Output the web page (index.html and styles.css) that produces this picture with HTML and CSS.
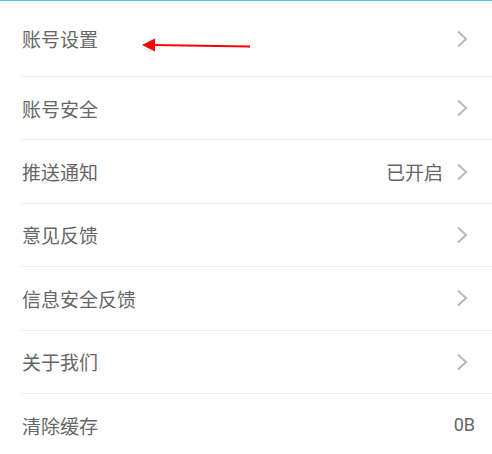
FILE: index.html
```html
<!DOCTYPE html>
<html lang="zh-CN">
<head>
<meta charset="utf-8">
<link rel="stylesheet" href="styles.css">
</head>
<body>
<div class="topline"></div>
<ul class="list">
  <li class="item first">
    <span class="label">账号设置</span>
    <span class="right"><svg class="chev" viewBox="0 0 12 18"><path d="M2 1.5 L10 9 L2 16.5"/></svg></span>
    <svg class="arrow" viewBox="0 0 110 16" width="110" height="16">
      <line x1="10" y1="7" x2="108" y2="8.5" stroke="#f00" stroke-width="2"/>
      <polygon points="0,7 13,0.5 13,13.5" fill="#f00"/>
    </svg>
  </li>
  <li class="item">
    <span class="label">账号安全</span>
    <span class="right"><svg class="chev" viewBox="0 0 12 18"><path d="M2 1.5 L10 9 L2 16.5"/></svg></span>
  </li>
  <li class="item">
    <span class="label">推送通知</span>
    <span class="right"><span class="value">已开启</span><svg class="chev" viewBox="0 0 12 18"><path d="M2 1.5 L10 9 L2 16.5"/></svg></span>
  </li>
  <li class="item">
    <span class="label">意见反馈</span>
    <span class="right"><svg class="chev" viewBox="0 0 12 18"><path d="M2 1.5 L10 9 L2 16.5"/></svg></span>
  </li>
  <li class="item">
    <span class="label">信息安全反馈</span>
    <span class="right"><svg class="chev" viewBox="0 0 12 18"><path d="M2 1.5 L10 9 L2 16.5"/></svg></span>
  </li>
  <li class="item">
    <span class="label">关于我们</span>
    <span class="right"><svg class="chev" viewBox="0 0 12 18"><path d="M2 1.5 L10 9 L2 16.5"/></svg></span>
  </li>
  <li class="item last">
    <span class="label">清除缓存</span>
    <span class="right"><span class="value plain">0B</span></span>
  </li>
</ul>
</body>
</html>
```
FILE: styles.css
```css
html, body {
  margin: 0;
  padding: 0;
  background: #fff;
}
body {
  font-family: "Noto Sans CJK SC", "Noto Sans", sans-serif;
  color: #666;
  overflow: hidden;
}
.topline {
  height: 1px;
  background: #5bbcf0;
}
.list {
  list-style: none;
  margin: 0;
  padding: 0 0 0 21px;
}
.item {
  position: relative;
  display: flex;
  align-items: center;
  justify-content: space-between;
  height: 62.4px;
  border-bottom: 1px solid #ececec;
  padding-left: 1px;
  padding-right: 17px;
}
.item.first {
  height: 75px;
}
.item.last {
  border-bottom: none;
}
.label {
  font-size: 19px;
  color: #666;
  line-height: 1;
}
.right {
  display: flex;
  align-items: center;
}
.value {
  font-size: 19px;
  color: #666;
  line-height: 1;
  margin-right: 13px;
}
.value.plain {
  margin-right: 0;
  font-family: "Roboto", "Noto Sans", sans-serif;
  font-size: 18px;
}
.chev {
  width: 12px;
  height: 18px;
  margin-right: 7px;
  fill: none;
  stroke: #b8b8b8;
  stroke-width: 2;
}
.arrow {
  position: absolute;
  left: 121px;
  top: 37px;
}
```
